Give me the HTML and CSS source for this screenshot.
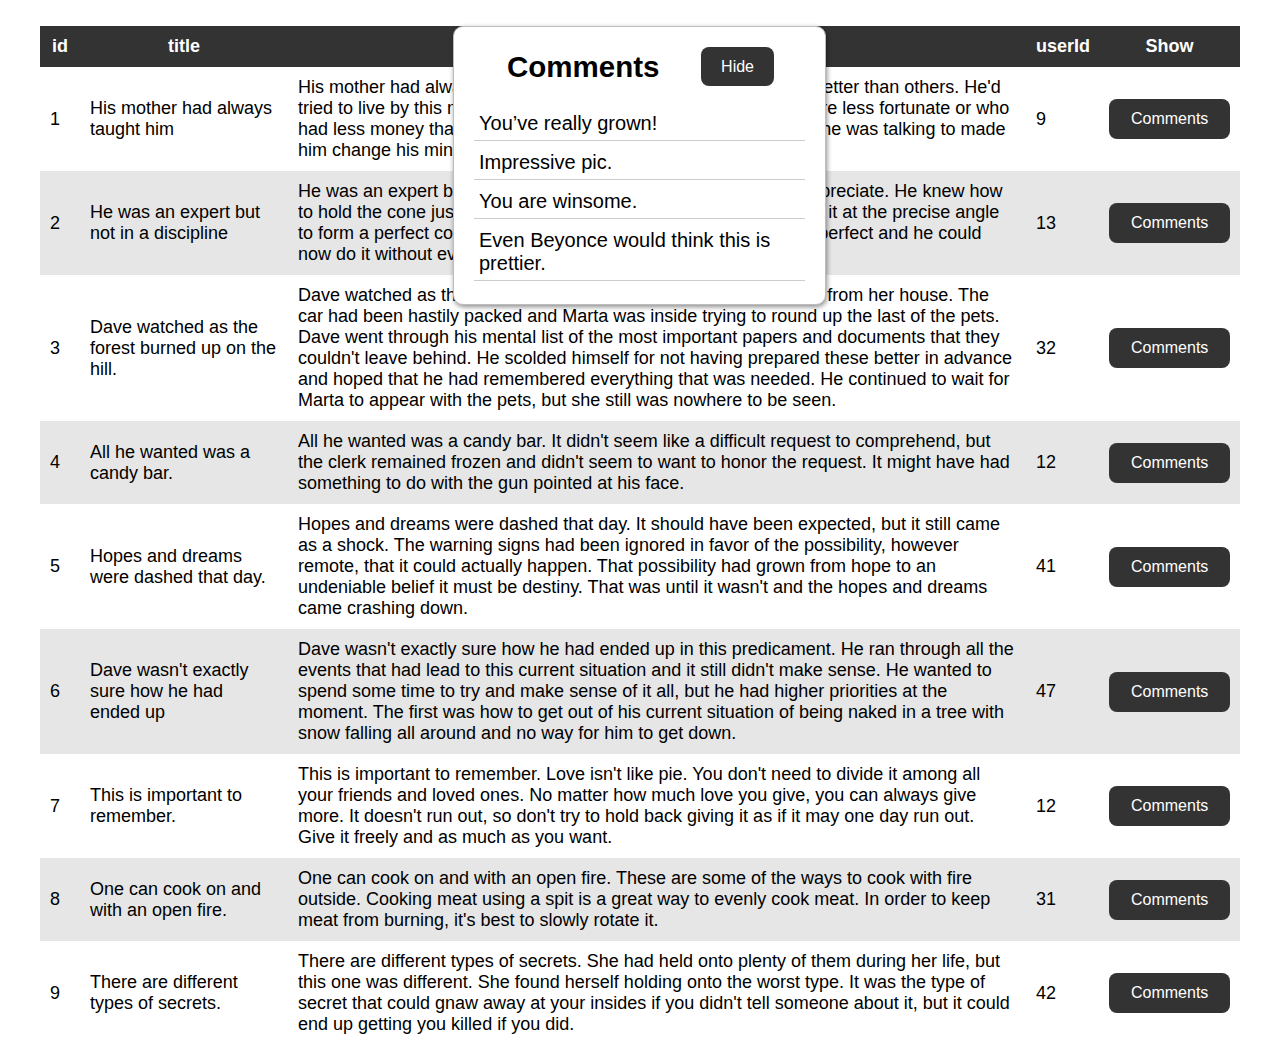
FILE: index.html
```html
<!DOCTYPE html>
<html lang="en">
<head>
<meta charset="utf-8">
<title>Posts</title>
<link rel="stylesheet" href="styles.css">
</head>
<body>
<div class="page">
  <table class="posts">
    <colgroup>
      <col class="c-id"><col class="c-title"><col class="c-body"><col class="c-user"><col class="c-show">
    </colgroup>
    <thead>
      <tr><th>id</th><th>title</th><th>body</th><th>userId</th><th>Show</th></tr>
    </thead>
    <tbody>
      <tr><td>1</td><td>His mother had always taught him</td><td>His mother had always taught him not to ever think of himself as better than others. He'd tried to live by this motto. He never looked down on those who were less fortunate or who had less money than him. But the stupidity of the group of people he was talking to made him change his mind.</td><td>9</td><td><button class="btn">Comments</button></td></tr>
      <tr><td>2</td><td>He was an expert but not in a discipline</td><td>He was an expert but not in a discipline that anyone could fully appreciate. He knew how to hold the cone just right so that the soft server ice-cream fell into it at the precise angle to form a perfect cone each and every time. It had taken years to perfect and he could now do it without even putting any thought behind it.</td><td>13</td><td><button class="btn">Comments</button></td></tr>
      <tr><td>3</td><td>Dave watched as the forest burned up on the hill.</td><td>Dave watched as the forest burned up on the hill, only a few miles from her house. The car had been hastily packed and Marta was inside trying to round up the last of the pets. Dave went through his mental list of the most important papers and documents that they couldn't leave behind. He scolded himself for not having prepared these better in advance and hoped that he had remembered everything that was needed. He continued to wait for Marta to appear with the pets, but she still was nowhere to be seen.</td><td>32</td><td><button class="btn">Comments</button></td></tr>
      <tr><td>4</td><td>All he wanted was a candy bar.</td><td>All he wanted was a candy bar. It didn't seem like a difficult request to comprehend, but the clerk remained frozen and didn't seem to want to honor the request. It might have had something to do with the gun pointed at his face.</td><td>12</td><td><button class="btn">Comments</button></td></tr>
      <tr><td>5</td><td>Hopes and dreams were dashed that day.</td><td>Hopes and dreams were dashed that day. It should have been expected, but it still came as a shock. The warning signs had been ignored in favor of the possibility, however remote, that it could actually happen. That possibility had grown from hope to an undeniable belief it must be destiny. That was until it wasn't and the hopes and dreams came crashing down.</td><td>41</td><td><button class="btn">Comments</button></td></tr>
      <tr><td>6</td><td>Dave wasn't exactly sure how he had ended up</td><td>Dave wasn't exactly sure how he had ended up in this predicament. He ran through all the events that had lead to this current situation and it still didn't make sense. He wanted to spend some time to try and make sense of it all, but he had higher priorities at the moment. The first was how to get out of his current situation of being naked in a tree with snow falling all around and no way for him to get down.</td><td>47</td><td><button class="btn">Comments</button></td></tr>
      <tr><td>7</td><td>This is important to remember.</td><td>This is important to remember. Love isn't like pie. You don't need to divide it among all your friends and loved ones. No matter how much love you give, you can always give more. It doesn't run out, so don't try to hold back giving it as if it may one day run out. Give it freely and as much as you want.</td><td>12</td><td><button class="btn">Comments</button></td></tr>
      <tr><td>8</td><td>One can cook on and with an open fire.</td><td>One can cook on and with an open fire. These are some of the ways to cook with fire outside. Cooking meat using a spit is a great way to evenly cook meat. In order to keep meat from burning, it's best to slowly rotate it.</td><td>31</td><td><button class="btn">Comments</button></td></tr>
      <tr><td>9</td><td>There are different types of secrets.</td><td>There are different types of secrets. She had held onto plenty of them during her life, but this one was different. She found herself holding onto the worst type. It was the type of secret that could gnaw away at your insides if you didn't tell someone about it, but it could end up getting you killed if you did.</td><td>42</td><td><button class="btn">Comments</button></td></tr>
    </tbody>
  </table>

  <div class="modal">
    <div class="modal-head">
      <h2 class="modal-title">Comments</h2>
      <button class="btn btn-hide">Hide</button>
    </div>
    <ul class="comment-list">
      <li>You’ve really grown!</li>
      <li>Impressive pic.</li>
      <li>You are winsome.</li>
      <li>Even Beyonce would think this is prettier.</li>
    </ul>
  </div>
</div>
</body>
</html>
```

FILE: styles.css
```css
html, body {
  margin: 0;
  padding: 0;
  background: #ffffff;
}

body {
  font-family: "Liberation Sans", Arial, sans-serif;
  color: #000;
}

.page {
  position: relative;
  padding: 26px 47px 0 40px;
}

.posts {
  width: 1200px;
  border-collapse: collapse;
  table-layout: fixed;
  font-size: 18px;
  line-height: 21px;
}

.c-id { width: 40px; }
.c-title { width: 208px; }
.c-body { width: 738px; }
.c-user { width: 73px; }
.c-show { width: 141px; }

.posts th {
  background: #333333;
  color: #ffffff;
  font-weight: bold;
  text-align: center;
  padding: 10px;
}

.posts td {
  padding: 10px;
  text-align: left;
  vertical-align: middle;
}

.posts tbody tr:nth-child(even) td {
  background: #e6e6e6;
}

.btn {
  font-family: "Liberation Sans", Arial, sans-serif;
  font-size: 16px;
  line-height: 18px;
  color: #ffffff;
  background: #333333;
  border: none;
  border-radius: 8px;
  padding: 11px 22px;
  cursor: pointer;
}

.modal {
  position: absolute;
  left: 453px;
  top: 26px;
  width: 373px;
  box-sizing: border-box;
  background: #ffffff;
  border: 1px solid #bdbdbd;
  border-radius: 10px;
  box-shadow: 1px 2px 5px rgba(0, 0, 0, 0.45);
  padding: 20px 20px 23px;
}

.modal-head {
  display: flex;
  align-items: center;
  justify-content: space-between;
  padding: 0 31px 0 33px;
  margin-bottom: 16px;
}

.modal-title {
  margin: 0;
  font-size: 29.5px;
  line-height: 34px;
  font-weight: bold;
}

.btn-hide {
  padding: 10px 20px;
  height: 39px;
}

.comment-list {
  list-style: none;
  margin: 0;
  padding: 0;
  font-size: 20px;
  line-height: 23px;
}

.comment-list li {
  padding: 10px 5px 5px;
  border-bottom: 1px solid #cccccc;
}
```
